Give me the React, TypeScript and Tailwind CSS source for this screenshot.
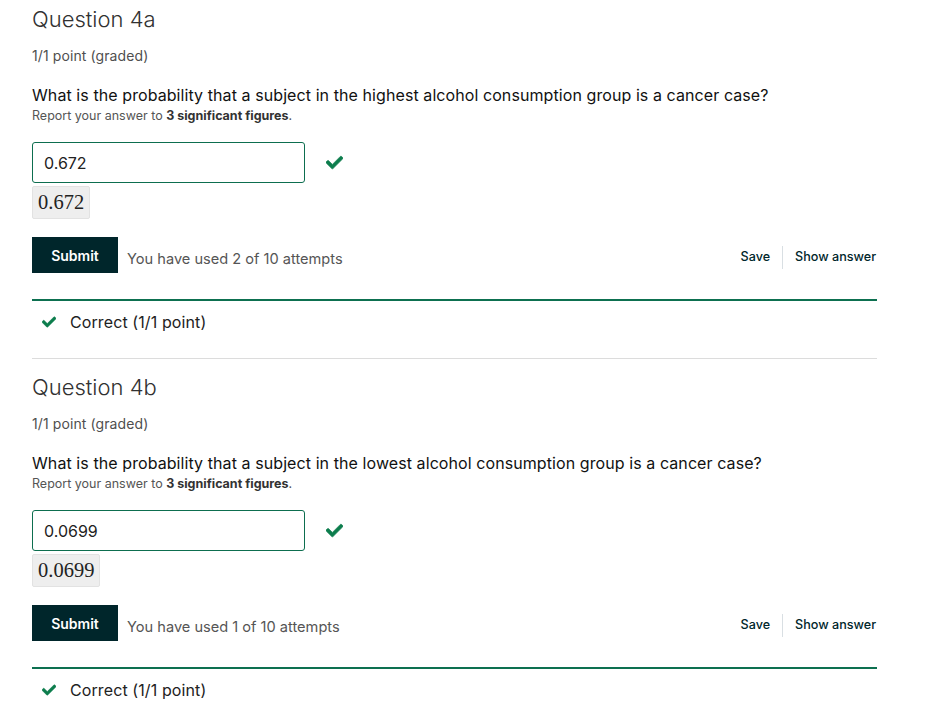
import { FaCheck } from "react-icons/fa";

interface ProblemProps {
  title: string;
  group: string;
  answer: string;
  used: number;
}

function Problem({ title, group, answer, used }: ProblemProps) {
  return (
    <section>
      <h3 className="text-[22px] leading-[28px] font-light text-[#313131]">{title}</h3>
      <p className="mt-[13px] text-[14px] leading-[20px] tracking-[0.1px] text-[#4f4f4f]">1/1 point (graded)</p>
      <p className="mt-[17px] text-[16px] leading-[24px] tracking-[0.08px] text-[#111]">
        What is the probability that a subject in the {group} alcohol consumption group is a cancer case?
      </p>
      <p className="text-[12.5px] leading-[17px] text-[#555]">
        Report your answer to <b className="font-bold text-[#333]">3 significant figures</b>.
      </p>
      <div className="mt-[18px] flex items-center">
        <div className="w-[273px] h-[41px] border border-[#0d6e4f] rounded-[3px] px-[11px] flex items-center text-[16px] text-[#222]">
          {answer}
        </div>
        <FaCheck className="ml-[21px] text-[#0d7d4d] w-[17px] h-[17px] stroke-[20px] stroke-[#0d7d4d]" />
      </div>
      <div className="mt-[3px] inline-block h-[33px] px-[5px] bg-[#eeeeee] border border-[#e2e2e2] rounded-[2px] text-[20.5px] leading-[31px] text-[#222] font-['Liberation_Serif',serif]">
        {answer}
      </div>
      <div className="mt-[18px] flex items-center">
        <button className="h-[36px] w-[86px] bg-[#00262b] text-white text-[14px] font-semibold">Submit</button>
        <span className="ml-[9px] mt-[9px] text-[14.6px] text-[#555]">You have used {used} of 10 attempts</span>
        <div className="ml-auto mt-[4px] flex items-center text-[12.6px] font-medium text-[#00262b]">
          <span>Save</span>
          <span className="ml-[12px] mr-[12px] w-px h-[23px] bg-[#d9dfe3]" />
          <span className="pr-px">Show answer</span>
        </div>
      </div>
      <div className="mt-[26px] h-[2px] bg-[#0d7050]" />
      <div className="mt-[9px] flex items-center h-[24px] pl-[10px]">
        <FaCheck className="text-[#0d7d4d] w-[14px] h-[14px] stroke-[20px] stroke-[#0d7d4d]" />
        <span className="ml-[14px] text-[16px] tracking-[0.1px] text-[#222]">Correct (1/1 point)</span>
      </div>
    </section>
  );
}

export default function App() {
  return (
    <div className="w-[926px] h-[714px] overflow-hidden bg-white font-['Inter',sans-serif]">
      <div className="ml-[32px] w-[845px] pt-[5px]">
        <Problem title="Question 4a" group="highest" answer="0.672" used={2} />
        <div className="mt-[24px] mb-[14px] h-px bg-[#dcdcdc]" />
        <Problem title="Question 4b" group="lowest" answer="0.0699" used={1} />
      </div>
    </div>
  );
}
